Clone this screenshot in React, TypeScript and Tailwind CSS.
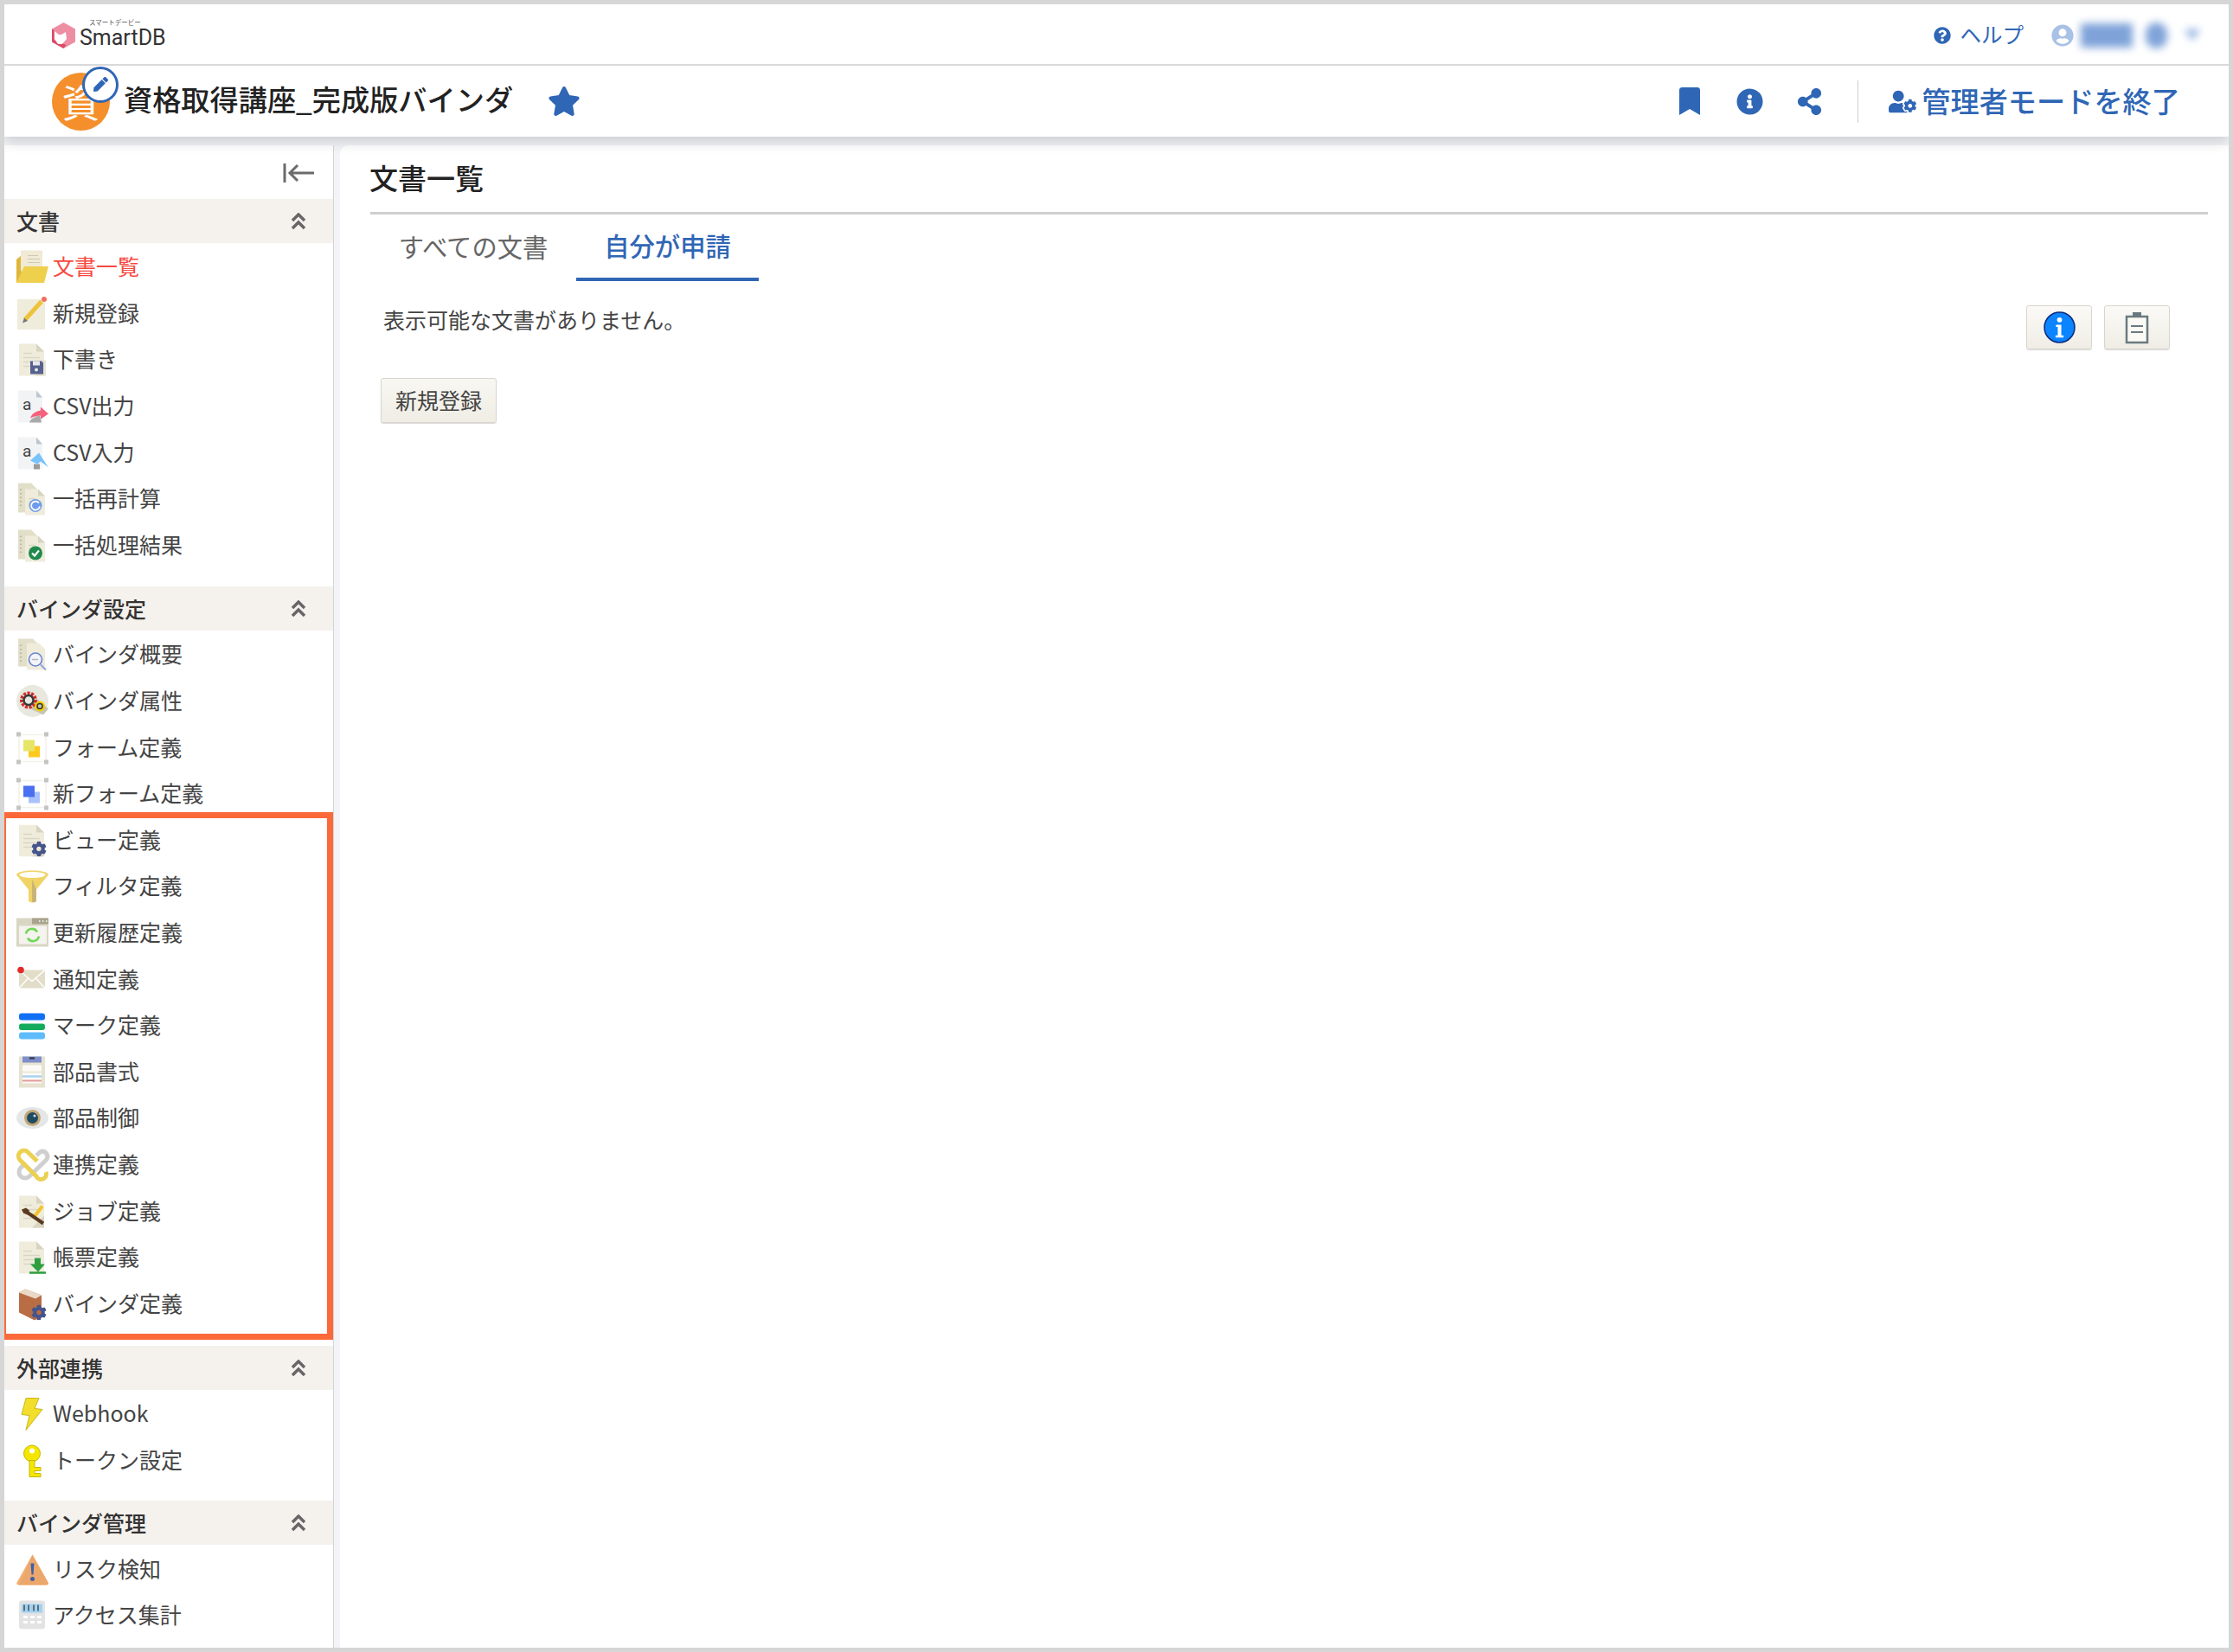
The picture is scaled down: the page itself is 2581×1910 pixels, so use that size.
import type { ReactNode } from 'react';
import {
  FaBookmark,
  FaInfoCircle,
  FaQuestionCircle,
  FaShareAlt,
  FaStar,
  FaUserCircle,
  FaUserCog,
  FaPen,
  FaCog,
} from 'react-icons/fa';

const paper = '#efecdc';
const fold = '#d8d4bf';

// folded sheet used by most of the menu icons
const Doc = ({ x = 3, w = 29, fill = paper }: { x?: number; w?: number; fill?: string }) => (
  <>
    <path d={`M${x} 0h${w - 9}l9 9v28h-${w}z`} fill={fill} />
    <path d={`M${x + w - 9} 0l9 9h-9z`} fill={fold} />
    <path d={`M${x + 5} 11h10M${x + 5} 16h${w - 10}M${x + 5} 21h${w - 14}M${x + 5} 26h${w - 16}`} stroke="#d9d6c6" strokeWidth="1.5" />
  </>
);

const TwoDocs = ({ children }: { children: ReactNode }) => (
  <>
    <path d="M2 0h15l7 7v27h-22z" fill="#e2dfc9" />
    <path d="M5 7v22" stroke="#a9a691" strokeWidth="1.5" strokeDasharray="1.5 3" />
    <path d="M10 7h15l8 8v22h-23z" fill={paper} />
    <path d="M25 7l8 8h-8z" fill={fold} />
    <path d="M14 18h8M14 22h14" stroke="#d9d6c6" strokeWidth="1.5" />
    {children}
  </>
);

const icons: Record<string, ReactNode> = {
  folder: (
    <>
      <path d="M0 36.500V9.500l6-5v32z" fill="#e0b63a" />
      <path d="M5 -1h25v24h-25z" fill="#f0ead6" />
      <path d="M13 5h12M13 9h14M13 13h14" stroke="#cfc9ae" strokeWidth="1.2" />
      <path d="M0 36.500L9 17.500h28l-5 19z" fill="#efd04d" />
    </>
  ),
  edit: (
    <>
      <path d="M1 1.500h32v35h-32z" fill={paper} />
      <path d="M10 25l19-21" stroke="#eec23a" strokeWidth="5" />
      <path d="M7 29l2-6 4 3.500z" fill="#777" />
      <circle cx="32" cy="1.500" r="3" fill="#f0705f" />
    </>
  ),
  draft: (
    <>
      <Doc />
      <path d="M22 19h12v18h-12z" fill="#d8d4bf" opacity="0.6" />
      <path d="M16 20h13l2 2v13h-15z" fill="#55618f" />
      <path d="M19 20h8v5h-8z" fill="#e8e8ee" />
      <circle cx="23" cy="30" r="2" fill="#e8e8ee" />
    </>
  ),
  csvOut: (
    <>
      <path d="M2 0h21l7 8v29h-28z" fill="#f2f3f5" />
      <path d="M23 0l7 8h-7z" fill="#bcc6d2" />
      <text x="7" y="22" fontSize="19" fill="#444" fontFamily="Roboto, sans-serif">a</text>
      <path d="M15 37c1-4 6-7 12-8l2 8z" fill="#a9a9a9" />
      <path d="M16 32c2-6 7-8 12-9v-4l9 8-9 6v-4c-4 0-8 1-12 3z" fill="#f5607b" />
    </>
  ),
  csvIn: (
    <>
      <path d="M2 0h21l7 8v29h-28z" fill="#f2f3f5" />
      <path d="M23 0l7 8h-7z" fill="#bcc6d2" />
      <text x="7" y="22" fontSize="19" fill="#444" fontFamily="Roboto, sans-serif">a</text>
      <path d="M20 37v-6h7v6z" fill="#9a9a9a" />
      <path d="M16 27l10-9 11 17-9-7-4 3z" fill="#79c3fb" />
    </>
  ),
  recalc: (
    <TwoDocs>
      <circle cx="22" cy="26" r="7.500" fill="#6f9bea" />
      <path d="M26 23a5 5 0 1 0 1 4" stroke="#fff" strokeWidth="1.8" fill="none" />
    </TwoDocs>
  ),
  result: (
    <TwoDocs>
      <circle cx="22" cy="27" r="8" fill="#1f8a4c" />
      <path d="M18 27l3 3 5-6" stroke="#fff" strokeWidth="2.2" fill="none" />
    </TwoDocs>
  ),
  overview: (
    <>
      <path d="M2 0h17l7 7v25h-24z" fill="#e2dfc9" />
      <path d="M5 7v20" stroke="#a9a691" strokeWidth="1.5" strokeDasharray="1.5 3" />
      <path d="M12 5h14l7 7v24h-21z" fill={paper} />
      <circle cx="22" cy="24" r="7.500" fill="#f3f4fa" stroke="#6a84d0" strokeWidth="1.6" />
      <path d="M18 24h7" stroke="#b7b7b7" strokeWidth="1.5" />
      <path d="M28 30l6 6" stroke="#8fa5e0" strokeWidth="2" />
    </>
  ),
  attrs: (
    <>
      <circle cx="18.500" cy="18" r="18.500" fill="#e8e8df" />
      <path d="M14 26l9-11 14 12-6 7z" fill="#c6c4b2" />
      <circle cx="14" cy="17" r="8" fill="none" stroke="#cf2b2b" strokeWidth="4" strokeDasharray="3 1.5" />
      <circle cx="14" cy="17" r="5.500" fill="none" stroke="#3a3a3a" strokeWidth="2.5" />
      <circle cx="27" cy="24" r="4.500" fill="none" stroke="#f0d000" strokeWidth="3" />
      <circle cx="27" cy="24" r="3" fill="none" stroke="#333" strokeWidth="1.5" />
    </>
  ),
  form: (
    <>
      <path d="M3 3h31v31h-31z" fill="none" stroke="#f3f1e8" strokeWidth="1.6" />
      <path d="M0 0h5v5h-5zM32 0h5v5h-5zM0 32h5v5h-5zM32 32h5v5h-5z" fill="#c4c4c4" />
      <path d="M14 16h13v13h-13z" fill="#fdc91d" />
      <path d="M8 9h13v13h-13z" fill="#e6e566" />
    </>
  ),
  newForm: (
    <>
      <path d="M3 3h31v31h-31z" fill="none" stroke="#f3f1e8" strokeWidth="1.6" />
      <path d="M0 0h5v5h-5zM32 0h5v5h-5zM0 32h5v5h-5zM32 32h5v5h-5z" fill="#c4c4c4" />
      <path d="M14 16h13v13h-13z" fill="#a9c2fb" />
      <path d="M8 9h13v13h-13z" fill="#4a6ff0" />
    </>
  ),
  filter: (
    <>
      <path d="M0 5c0-3 8-5 18.500-5s18.500 2 18.500 5l-14 17v13c0 2-8 3-9 0v-13z" fill="#f0d468" />
      <path d="M18 10l5 12v13c0 1-3 3-5 1z" fill="#c9b478" />
      <ellipse cx="18.500" cy="5" rx="15" ry="3.400" fill="#fff" />
    </>
  ),
  history: (
    <>
      <path d="M0 1h37v33h-37z" fill="#d9d6c3" />
      <path d="M18 1h19v7h-19z" fill="#a8a48d" />
      <path d="M26 4.500h1.500M30 4.500h1.500M34 4.500h1.500" stroke="#fff" strokeWidth="1.5" />
      <path d="M3 10h32v21h-32z" fill="#f4f3ee" />
      <path d="M11 19a7 7 0 0 1 13-2M26 22a7 7 0 0 1-13 2" stroke="#72d858" strokeWidth="2.6" fill="none" />
    </>
  ),
  mail: (
    <>
      <path d="M3 7h30v21h-30z" fill="#e2ddc8" />
      <path d="M3 7l15 13 15-13M3 28l11-12M33 28l-11-12" stroke="#fff" strokeWidth="1.4" fill="none" />
      <circle cx="5" cy="7" r="3.800" fill="#e32a2a" />
    </>
  ),
  mark: (
    <>
      <rect x="3" y="4" width="30" height="8" rx="3" fill="#0f6ff5" />
      <rect x="3" y="16" width="30" height="7.500" rx="3" fill="#14ab5c" />
      <rect x="3" y="26" width="30" height="8" rx="3" fill="#5ebcfa" />
    </>
  ),
  clipboard: (
    <>
      <path d="M3 0h30v36h-30z" fill="#e6e2d0" />
      <path d="M7 0h22v7h-22z" fill="#7f8fcb" />
      <path d="M15 1h6v2h-6z" fill="#333" />
      <path d="M7 10h22v21h-22z" fill="#fbfaf5" />
      <path d="M7 18h22" stroke="#ece9da" strokeWidth="2" />
      <path d="M7 23h22" stroke="#a9d3f0" strokeWidth="2.5" />
      <path d="M7 28h22" stroke="#e49a9a" strokeWidth="2" />
    </>
  ),
  eye: (
    <>
      <ellipse cx="18.500" cy="18" rx="18.500" ry="12.500" fill="#e4e7e8" />
      <circle cx="18.500" cy="18" r="9.500" fill="#c3a673" />
      <circle cx="18.500" cy="18" r="6.500" fill="#1f4a63" />
      <circle cx="21" cy="15.500" r="1.600" fill="#cbd8e0" />
    </>
  ),
  link: (
    <>
      <path d="M23 7.500L28 3a6 6 0 0 1 6 10L15 31.500a6 6 0 0 1-10-10l6-5" stroke="#cfcfcf" strokeWidth="5" fill="none" />
      <path d="M24 14L12 2.500a6.500 6.500 0 0 0-8 10L23 31.500a6 6 0 0 0 11-5" stroke="#ecd052" strokeWidth="5" fill="none" />
    </>
  ),
  job: (
    <>
      <Doc />
      <path d="M18 37l14-14v14z" fill="#d8d4bf" />
      <path d="M20 25l10-13" stroke="#f3c52b" strokeWidth="4" />
      <path d="M9 16l3 3 19 13" stroke="#5b3a1f" strokeWidth="4" fill="none" />
      <path d="M6 16l5-2 4 3-2 5-5-2z" fill="#5b3a1f" />
    </>
  ),
  report: (
    <>
      <Doc />
      <path d="M21 19h7v7h5l-8 9-9-9h5z" fill="#2e9e3f" />
      <path d="M15 36h19" stroke="#2e9e3f" strokeWidth="2.5" />
    </>
  ),
  webhook: <path d="M11 0h15l-5 12 9 1-19 24 4-17-9-1z" fill="#f3df2b" stroke="#c9b71e" strokeWidth="1" />,
  key: (
    <>
      <circle cx="18" cy="10" r="9.500" fill="#f5e600" stroke="#c4b800" strokeWidth="1" />
      <circle cx="18" cy="7" r="3" fill="#fff" />
      <path d="M15 18h6v8h7v4h-7v3h7v4h-13z" fill="#f5e600" stroke="#c4b800" strokeWidth="1" />
    </>
  ),
  risk: (
    <>
      <path d="M18.500 1l18 32q1 3-2 3h-32q-3 0-2-3z" fill="#f2b276" />
      <path d="M18.500 1l18 32q1 3-2 3h-32z" fill="#eca76c" />
      <path d="M16.500 11h4l-1 13h-2z" fill="#3f5fa8" />
      <circle cx="18.500" cy="29" r="2.500" fill="#3f5fa8" />
    </>
  ),
  calc: (
    <>
      <rect x="3" y="1" width="30" height="33" rx="3" fill="#e3e3e3" />
      <rect x="6" y="5" width="24" height="10" fill="#9fd3f5" />
      <path d="M9 6v7M14 6v7M20 6v7M25 6v7" stroke="#555" strokeWidth="1.6" />
      <path d="M8 20h5M16 20h5M24 20h5M8 26h5M16 26h5M24 26h5" stroke="#fff" strokeWidth="3" />
    </>
  ),
};

// doc + gear and book + gear use the icon package's cog on top
const GearIcon = ({ book }: { book?: boolean }) => (
  <span className="relative block h-[37px] w-[37px] shrink-0 translate-y-[1.5px]">
    <svg viewBox="0 0 37 37" className="h-[37px] w-[37px]">
      {book ? (
        <>
          <path d="M3 5l7-4 19 7v25l-8 4-18-9z" fill="#b96d45" />
          <path d="M10 1l19 7-7 4-19-7z" fill="#ead9c6" />
        </>
      ) : (
        <>
          <Doc />
          <path d="M18 37l14-14v14z" fill="#d8d4bf" />
        </>
      )}
    </svg>
    <FaCog className="absolute bottom-0 right-[2px] h-[18px] w-[18px] text-[#45548c]" />
  </span>
);

type Item = { label: string; icon: string; active?: boolean };
type Section = { title: string; gap: string; items: Item[] };

const sections: Section[] = [
  {
    title: '文書',
    gap: 'mb-[22px]',
    items: [
      { label: '文書一覧', icon: 'folder', active: true },
      { label: '新規登録', icon: 'edit' },
      { label: '下書き', icon: 'draft' },
      { label: 'CSV出力', icon: 'csvOut' },
      { label: 'CSV入力', icon: 'csvIn' },
      { label: '一括再計算', icon: 'recalc' },
      { label: '一括処理結果', icon: 'result' },
    ],
  },
  {
    title: 'バインダ設定',
    gap: 'mb-[23px]',
    items: [
      { label: 'バインダ概要', icon: 'overview' },
      { label: 'バインダ属性', icon: 'attrs' },
      { label: 'フォーム定義', icon: 'form' },
      { label: '新フォーム定義', icon: 'newForm' },
      { label: 'ビュー定義', icon: 'gear' },
      { label: 'フィルタ定義', icon: 'filter' },
      { label: '更新履歴定義', icon: 'history' },
      { label: '通知定義', icon: 'mail' },
      { label: 'マーク定義', icon: 'mark' },
      { label: '部品書式', icon: 'clipboard' },
      { label: '部品制御', icon: 'eye' },
      { label: '連携定義', icon: 'link' },
      { label: 'ジョブ定義', icon: 'job' },
      { label: '帳票定義', icon: 'report' },
      { label: 'バインダ定義', icon: 'book' },
    ],
  },
  {
    title: '外部連携',
    gap: 'mb-[21px]',
    items: [
      { label: 'Webhook', icon: 'webhook' },
      { label: 'トークン設定', icon: 'key' },
    ],
  },
  {
    title: 'バインダ管理',
    gap: 'mb-0',
    items: [
      { label: 'リスク検知', icon: 'risk' },
      { label: 'アクセス集計', icon: 'calc' },
    ],
  },
];

function MenuIcon({ name }: { name: string }) {
  if (name === 'gear') return <GearIcon />;
  if (name === 'book') return <GearIcon book />;
  return (
    <svg viewBox="0 0 37 37" className="h-[37px] w-[37px] shrink-0 translate-y-[1.5px] overflow-visible">
      {icons[name]}
    </svg>
  );
}

function Sidebar() {
  return (
    <aside className="relative h-full w-[380px] shrink-0 bg-white">
      <div className="flex h-[62px] items-center justify-end pr-[20px] pt-[2px]">
        <svg viewBox="0 0 38 24" className="h-[24px] w-[38px]" fill="none" stroke="#6b6b6b" strokeWidth="3">
          <path d="M2 1v22M36 12H8M17 3l-9 9 9 9" />
        </svg>
      </div>
      {sections.map((section) => (
        <section key={section.title} className={section.gap}>
          <div className="flex h-[51px] items-center justify-between bg-[#f5f1ed] pl-[14px] pr-[31px]">
            <span className="text-[25px] font-medium text-[#333]">{section.title}</span>
            <svg viewBox="0 0 18 20" className="h-[20px] w-[18px]" fill="none" stroke="#666" strokeWidth="3.5">
              <path d="M2 9l7-7 7 7M2 18l7-7 7 7" />
            </svg>
          </div>
          {section.items.map((item) => (
            <div key={item.label} className="flex h-[53.6px] items-center gap-[5px] pl-[14px]">
              <MenuIcon name={item.icon} />
              <span className={`text-[25px] leading-none ${item.active ? 'text-[#f6483f]' : 'text-[#444]'}`}>{item.label}</span>
            </div>
          ))}
        </section>
      ))}
      {/* highlight frame around the view / form definition group */}
      <div className="pointer-events-none absolute left-0 top-[771px] h-[610px] w-[380px] border-[7px] border-l-2 border-[#fb693b]" />
      <div className="pointer-events-none absolute left-[-5px] top-[771px] h-[7px] w-[5px] bg-[#fb693b]" />
    </aside>
  );
}

function TopBars() {
  return (
    <header className="relative z-10 bg-white shadow-[0_6px_14px_rgba(0,0,0,0.16)]">
      <div className="flex h-[71px] items-center justify-between border-b-2 border-[#d9d9d9] pl-[55px] pr-[33px] pt-[2px]">
        <div className="flex items-center gap-[5px]">
          <svg viewBox="0 0 27 30" className="h-[30px] w-[27px]">
            <path d="M13.500 0L27 7.500v15L13.500 30 0 22.500v-15z" fill="#ee8ea3" />
            <path d="M0 7.500v15L13.500 30l3-4-14-6V9z" fill="#dc4a67" />
            <path d="M3 10l5 4h3l5-3 1 8-5 6H7l-4-6z" fill="#fff" />
          </svg>
          <div className="relative mt-[6px] font-['Roboto',sans-serif] text-[25px] font-normal leading-none text-[#333]">
            <span className="absolute left-[11px] top-[-9px] whitespace-nowrap font-['Noto_Sans_CJK_JP',sans-serif] text-[7.5px] font-normal leading-none text-[#555]">スマートデービー</span>
            SmartDB
          </div>
        </div>
        <div className="flex items-center text-[#2f66b5]">
          <FaQuestionCircle className="h-[20px] w-[20px]" />
          <span className="ml-[11px] text-[24.5px] leading-none">ヘルプ</span>
          <FaUserCircle className="ml-[32px] h-[26px] w-[26px] text-[#a9c1e6]" />
          <div className="ml-[8px] flex items-center blur-[5px]">
            <span className="h-[28px] w-[60px] bg-[#7fa3d9]" />
            <span className="ml-[15px] h-[30px] w-[25px] rounded-full bg-[#7fa3d9]" />
            <span className="ml-[20px] h-0 w-0 border-x-[9px] border-t-[13px] border-x-transparent border-t-[#8fb0e0]" />
          </div>
        </div>
      </div>
      <div className="flex h-[82px] items-center justify-between pl-[55px] pr-[56px]">
        <div className="flex items-center">
          <div className="relative flex h-[67px] w-[67px] items-center justify-center rounded-full bg-[#f48f2c] text-[44px] leading-none text-white">
            資
            <span className="absolute left-[35px] top-[-7px] flex h-[42px] w-[42px] items-center justify-center rounded-full border-[3px] border-[#2f66b5] bg-white">
              <FaPen className="h-[17px] w-[17px] text-[#2f66b5]" />
            </span>
          </div>
          <h1 className="mb-[6px] ml-[16px] text-[33.2px] font-medium leading-none text-[#222]">資格取得講座_完成版バインダ</h1>
          <FaStar className="ml-[40px] h-[36px] w-[38px] text-[#2f66b5]" />
        </div>
        <div className="flex items-center text-[#2f66b5]">
          <FaBookmark className="h-[32px] w-[24px]" />
          <FaInfoCircle className="ml-[42px] h-[31px] w-[31px]" />
          <FaShareAlt className="ml-[39px] h-[31px] w-[29px]" />
          <span className="ml-[41px] h-[49px] w-px bg-[#cfcfcf]" />
          <FaUserCog className="ml-[35px] h-[27px] w-[32px]" />
          <span className="mb-[2px] ml-[6px] text-[33.2px] font-medium leading-none">管理者モードを終了</span>
        </div>
      </div>
    </header>
  );
}

function ToolButton({ children }: { children: ReactNode }) {
  return (
    <button className="flex h-[51px] w-[76px] items-center justify-center rounded-[3px] border border-[#d8d6cc] bg-gradient-to-b from-[#fbfaf7] to-[#efede5] shadow-[0_1px_1px_rgba(0,0,0,0.15)]">
      {children}
    </button>
  );
}

function Main() {
  return (
    <main className="relative mt-[10px] min-w-0 flex-1 rounded-tl-[10px] bg-white pl-[35px] pr-[24px]">
      <h2 className="ml-[-1px] flex h-[77px] items-center pb-[2px] text-[33px] font-medium leading-none text-[#222]">文書一覧</h2>
      <div className="h-[3px] bg-[#cfcfcf]" />
      <nav className="flex h-[77px] text-[29.3px]">
        <span className="flex w-[238px] items-center justify-center pb-[4px] text-[#666]">すべての文書</span>
        <span className="flex w-[211px] items-center justify-center border-b-4 border-[#2f66b5] pb-[1px] font-medium text-[#2f66b5]">自分が申請</span>
      </nav>
      <div className="flex justify-between pl-[15px] pr-[44px] pt-[28px]">
        <p className="mt-[-2px] text-[25px] leading-[36px] text-[#444]">表示可能な文書がありません。</p>
        <div className="flex gap-[14px]">
          <ToolButton>
            <svg viewBox="0 0 36 36" className="h-[37px] w-[37px]">
              <circle cx="18" cy="18" r="17" fill="#0a84ff" stroke="#0b2a80" strokeWidth="1.5" />
              <circle cx="18" cy="9.500" r="2.800" fill="#fff" />
              <path d="M14 15h6v12h2.500v2.500h-9v-2.500h2.500v-9.500h-2z" fill="#fff" />
            </svg>
          </ToolButton>
          <ToolButton>
            <svg viewBox="0 0 28 38" className="h-[38px] w-[28px]" fill="none" stroke="#6a7a80" strokeWidth="2.5">
              <path d="M2 6h24v30h-24z" fill="#fbfaf5" />
              <path d="M9 1h10v5h-10z" fill="#6a7a80" stroke="none" />
              <path d="M7 17h14M7 24h14" strokeWidth="2" />
            </svg>
          </ToolButton>
        </div>
      </div>
      <button className="ml-[12px] mt-[33px] flex h-[52px] w-[134px] items-center justify-center rounded-[3px] border border-[#d8d6cc] bg-gradient-to-b from-[#f8f7f2] to-[#efede4] pb-[2px] text-[25px] leading-none text-[#444] shadow-[0_1px_1px_rgba(0,0,0,0.15)]">
        新規登録
      </button>
    </main>
  );
}

export default function App() {
  return (
    <div className="flex h-[1910px] w-[2581px] flex-col overflow-hidden border-[5px] border-[#d6d6d6] bg-[#f3f4f8] font-['Noto_Sans_CJK_JP',sans-serif]">
      <TopBars />
      <div className="flex min-h-0 flex-1">
        <div className="mr-[7px] mt-[10px] border-r border-[#d4d4d4]">
          <Sidebar />
        </div>
        <Main />
      </div>
    </div>
  );
}
